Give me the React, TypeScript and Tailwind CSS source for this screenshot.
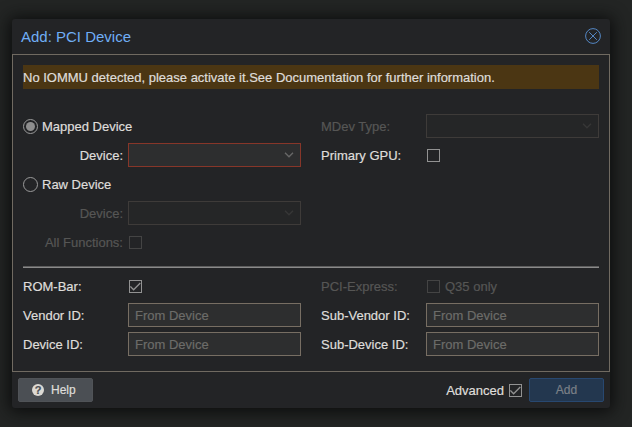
import { clsx } from 'clsx';
import type { ReactNode } from 'react';

function Chevron({ className }: { className: string }) {
  return (
    <svg
      viewBox="0 0 10 6"
      className={clsx('h-[6px] w-[10px] fill-none', className)}
      strokeWidth="1.3"
    >
      <path d="M1 .7 L5 4.8 L9 .7" />
    </svg>
  );
}

function Label({
  children,
  disabled,
  right,
}: {
  children: ReactNode;
  disabled?: boolean;
  right?: boolean;
}) {
  return (
    <span
      className={clsx(
        'w-[105px] shrink-0 whitespace-nowrap',
        right && 'pr-[5px] text-right',
        disabled && 'text-[#565655]'
      )}
    >
      {children}
    </span>
  );
}

function Row({ children }: { children?: ReactNode }) {
  return <div className="flex h-6 items-center">{children}</div>;
}

function Radio({ label, checked }: { label: string; checked?: boolean }) {
  return (
    <Row>
      <span className="mr-1 flex size-[15px] items-center justify-center rounded-full border border-[#9a9a9a]">
        {checked && <span className="size-[9px] rounded-full bg-[#8e8e8e]" />}
      </span>
      {label}
    </Row>
  );
}

function Checkbox({
  checked,
  disabled,
}: {
  checked?: boolean;
  disabled?: boolean;
}) {
  return (
    <span
      className={clsx(
        'flex size-[13px] shrink-0 items-center justify-center border',
        disabled ? 'border-[#444444]' : 'border-[#929292]'
      )}
    >
      {checked && (
        <svg
          viewBox="0 0 11 11"
          className="size-[11px] fill-none stroke-[#929292]"
          strokeWidth="1.3"
        >
          <path d="M.4 5.4 L3.6 8.7 L10.3 2" />
        </svg>
      )}
    </span>
  );
}

function Combo({ state }: { state: 'invalid' | 'disabled' }) {
  return (
    <div
      className={clsx(
        'flex h-6 w-[173px] items-center justify-end border pr-[6px]',
        state === 'invalid'
          ? 'border-[#873629] bg-[#2d2e2f]'
          : 'border-[#3e3b39] bg-[#252627]'
      )}
    >
      <Chevron
        className={state === 'invalid' ? 'stroke-[#686868]' : 'stroke-[#373737]'}
      />
    </div>
  );
}

function TextField({ label }: { label: string }) {
  return (
    <Row>
      <Label>{label}</Label>
      <input
        placeholder="From Device"
        className="h-6 w-[173px] border border-[#776e63] bg-[#2d2e2f] px-[6px] placeholder:text-[#6c6c69] placeholder:opacity-100"
      />
    </Row>
  );
}

function HelpIcon() {
  return (
    <span className="mr-[7px] flex size-3 items-center justify-center rounded-full bg-[#dcd9d4] text-[11px] leading-none font-bold text-[#4b4f54]">
      ?
    </span>
  );
}

export default function App() {
  return (
    <div className="h-[427px] w-[632px] overflow-hidden bg-[#232524] pt-[19px] pl-3 font-['Liberation_Sans',Arial,sans-serif] text-[13px] leading-[17px] text-[#dfddda] [-webkit-text-stroke:0.2px]">
      <div className="flex h-[389px] w-[598px] flex-col rounded-[3px] bg-[#232426] shadow-[0_1px_16px_3px_#0c0d0d]">
        <header className="flex h-[35px] shrink-0 items-center justify-between pr-[9px] pl-[9px] text-[15px] text-[#70aef5] [-webkit-text-stroke:0]">
          <span>Add: PCI Device</span>
          <svg
            viewBox="0 0 16 16"
            className="-mt-px size-4 fill-none stroke-[#5487c4]"
          >
            <circle cx="8" cy="8" r="7.4" />
            <path d="M4.2 4.2 L11.8 11.8 M11.8 4.2 L4.2 11.8" />
          </svg>
        </header>

        <main className="h-[318px] shrink-0 border border-[#706a61] px-[10px] pt-[10px]">
          <div className="flex h-6 items-center bg-[#4b3613] whitespace-nowrap">
            No IOMMU detected, please activate it.See Documentation for further
            information.
          </div>

          <div className="mt-[25px] flex gap-5">
            <div className="flex w-[278px] flex-col gap-[5px]">
              <Radio label="Mapped Device" checked />
              <Row>
                <Label right>Device:</Label>
                <Combo state="invalid" />
              </Row>
              <Radio label="Raw Device" />
              <Row>
                <Label right disabled>
                  Device:
                </Label>
                <Combo state="disabled" />
              </Row>
              <Row>
                <Label right disabled>
                  All Functions:
                </Label>
                <span className="ml-px">
                  <Checkbox disabled />
                </span>
              </Row>
            </div>
            <div className="flex w-[278px] flex-col gap-[5px]">
              <Row>
                <Label disabled>MDev Type:</Label>
                <Combo state="disabled" />
              </Row>
              <Row>
                <Label>Primary GPU:</Label>
                <span className="ml-px">
                  <Checkbox />
                </span>
              </Row>
            </div>
          </div>

          <div className="mt-3 h-[2px] border-t border-[#5d5d5d] bg-[#8a8a8a]" />

          <div className="mt-[6px] flex gap-5">
            <div className="flex w-[278px] flex-col gap-[5px]">
              <Row>
                <Label>ROM-Bar:</Label>
                <span className="ml-px">
                  <Checkbox checked />
                </span>
              </Row>
              <TextField label="Vendor ID:" />
              <TextField label="Device ID:" />
            </div>
            <div className="flex w-[278px] flex-col gap-[5px]">
              <Row>
                <Label disabled>PCI-Express:</Label>
                <span className="mr-[5px] ml-px">
                  <Checkbox disabled />
                </span>
                <span className="text-[#565655]">Q35 only</span>
              </Row>
              <TextField label="Sub-Vendor ID:" />
              <TextField label="Sub-Device ID:" />
            </div>
          </div>
        </main>

        <footer className="flex h-9 items-center pr-[6px] pl-[6px]">
          <button className="flex h-6 w-[75px] items-center rounded-[2px] border border-[#505357] bg-[#4b4f54] pl-[13px] text-xs">
            <HelpIcon />
            Help
          </button>
          <span className="mr-[5px] ml-auto">Advanced</span>
          <Checkbox checked />
          <button className="ml-[7px] h-6 w-[75px] rounded-[2px] border border-[#284870] bg-[#23374f] pb-px text-xs text-[#7b8087]">
            Add
          </button>
        </footer>
      </div>
    </div>
  );
}
